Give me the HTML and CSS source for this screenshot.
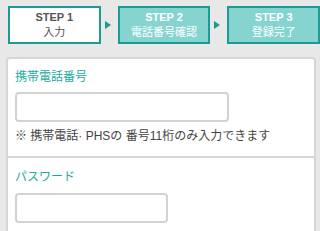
FILE: index.html
```html
<!DOCTYPE html>
<html lang="ja">
<head>
<meta charset="utf-8">
<link rel="stylesheet" href="styles.css">
</head>
<body>
<div class="steps">
  <div class="step current"><div class="step-no">STEP 1</div><div class="step-name">入力</div></div>
  <div class="arrow"></div>
  <div class="step"><div class="step-no">STEP 2</div><div class="step-name">電話番号確認</div></div>
  <div class="arrow"></div>
  <div class="step"><div class="step-no">STEP 3</div><div class="step-name">登録完了</div></div>
</div>
<div class="card">
  <div class="section">
    <div class="label">携帯電話番号</div>
    <div class="input wide"></div>
    <div class="note">※ 携帯電話· PHSの 番号11桁のみ入力できます</div>
  </div>
  <div class="section">
    <div class="label">パスワード</div>
    <div class="input narrow"></div>
  </div>
</div>
</body>
</html>
```
FILE: styles.css
```css
html, body { margin: 0; padding: 0; }
body {
  background: #e8e8e8;
  font-family: "Liberation Sans", "Noto Sans CJK JP", sans-serif;
  width: 320px;
  height: 231px;
  overflow: hidden;
}
.steps {
  display: flex;
  align-items: center;
  padding: 6px 0 0 8px;
  height: 38px;
}
.step {
  box-sizing: border-box;
  width: 93px;
  height: 38px;
  border: 2px solid #1a9c94;
  background: #86d4cf;
  color: #fff;
  display: flex;
  flex-direction: column;
  align-items: center;
  justify-content: center;
  font-size: 11px;
  line-height: 15px;
}
.step.current { background: #fff; color: #555; }
.step-no { font-weight: bold; }
.arrow {
  width: 0; height: 0;
  margin: 0 5px 0 4px;
  border-top: 4px solid transparent;
  border-bottom: 4px solid transparent;
  border-left: 6px solid #1a9c94;
}
.arrow + .step { margin-left: 2px; }
.card {
  box-sizing: border-box;
  margin: 13px 0 0 6px;
  width: 310px;
  height: 174px;
  overflow: hidden;
  background: #fff;
  border: 2px solid #d6d6d6;
  border-bottom: 0;
  border-radius: 4px 4px 0 0;
}
.section { padding: 10px 7px 0 7px; }
.section + .section { border-top: 2px solid #d6d6d6; padding-top: 11px; }
.section:first-child { height: 87px; }
.label {
  color: #22aaa2;
  font-size: 12px;
  line-height: 16px;
  height: 16px;
}
.input {
  box-sizing: border-box;
  margin-top: 7px;
  height: 30px;
  border: 2px solid #d2d2d2;
  border-radius: 4px;
  background: #fff;
}
.wide { width: 214px; }
.narrow { width: 153px; margin-top: 8px; }
.note {
  margin-top: 6px;
  color: #444;
  font-size: 12px;
  line-height: 16px;
}
```
